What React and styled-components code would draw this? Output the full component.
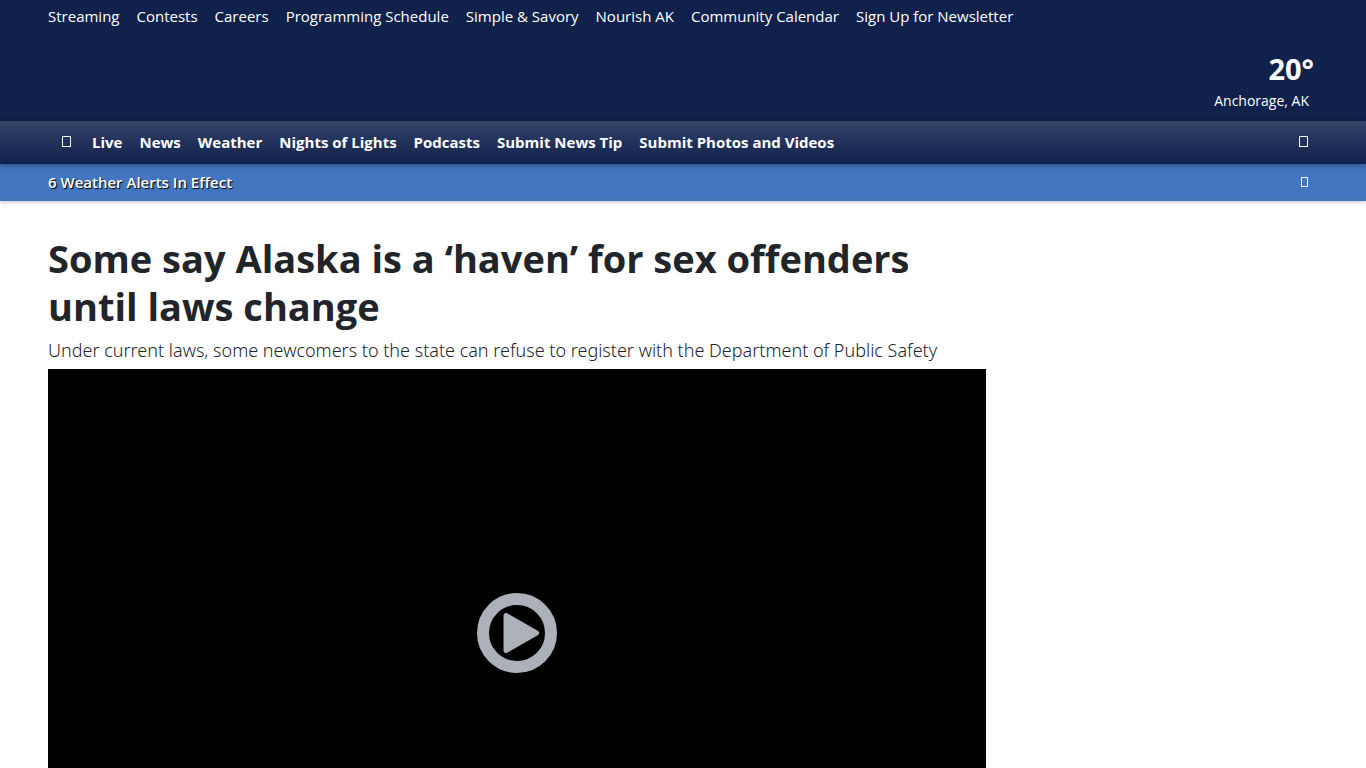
import React from "react";
import styled, { createGlobalStyle } from "styled-components";

const GlobalStyle = createGlobalStyle`
  *, *::before, *::after { box-sizing: border-box; }
  body {
    margin: 0;
    background: #fff;
    color: #212529;
    font-family: "Open Sans", "Noto Sans", sans-serif;
    font-size: 15px;
    line-height: 24px;
  }
`;

const Masthead = styled.header`
  background: #10214b;
  color: #fff;
`;

const TopNav = styled.nav`
  display: flex;
  flex-wrap: wrap;
  gap: 0 17px;
  padding: 4px 48px;
`;

const NavLink = styled.a`
  color: #fff;
  text-decoration: none;
  font-weight: ${(p) => (p.$strong ? 700 : 400)};
  &:hover { text-decoration: underline; }
`;

const BrandRow = styled.div`
  display: flex;
  justify-content: flex-end;
  padding: 17px 52px 8px;
`;

const Conditions = styled.a`
  display: flex;
  flex-direction: column;
  align-items: flex-end;
  color: #fff;
  text-decoration: none;
`;

const Temperature = styled.strong`
  font-size: 29px;
  line-height: 40px;
`;

const City = styled.span`
  padding: 0 5px;
  font-size: 14px;
  line-height: 24px;
`;

const MainNav = styled.nav`
  position: relative;
  display: flex;
  align-items: center;
  gap: 16px;
  min-height: 43px;
  padding: 0 53px 2px 57px;
  background: linear-gradient(#34466a, #27365f 35%, #10214b);
  box-shadow: 0 0 6px rgba(0, 0, 0, 0.4);
`;

const MainLinks = styled.div`
  display: flex;
  flex: 1;
  flex-wrap: wrap;
  gap: 0 17px;
`;

const IconButton = styled.button`
  display: flex;
  padding: 4px 5px;
  border: 0;
  background: none;
  color: #fff;
  cursor: pointer;
`;

const Glyph = styled.span`
  width: ${(p) => (p.$small ? 7 : 9)}px;
  height: ${(p) => (p.$small ? 10 : 11)}px;
  border: 1px solid currentColor;
`;

const AlertBar = styled.section`
  display: flex;
  align-items: center;
  justify-content: space-between;
  min-height: 37px;
  padding: 0 53px 2px 48px;
  background: linear-gradient(#3f70b5, #4475c1 30%, #4475c1 85%, #4876b6);
  box-shadow: 0 1px 4px rgba(0, 0, 60, 0.25);
  color: #fff;
`;

const AlertText = styled.a`
  color: #fff;
  font-weight: 600;
  text-decoration: none;
  text-shadow: 1px 1px 1px #000;
`;

const Page = styled.main`
  display: grid;
  grid-template-columns: minmax(0, 1fr) 300px;
  gap: 32px;
  padding: 33px 48px 0;
`;

const Headline = styled.h1`
  margin: 0 0 7px;
  font-size: 38px;
  font-weight: 700;
  line-height: 48px;
`;

const Deck = styled.p`
  margin: 0 0 6px;
  font-family: "Noto Sans", "Open Sans", sans-serif;
  font-size: 18px;
  font-weight: 300;
  line-height: 26px;
`;

const Player = styled.div`
  display: flex;
  align-items: center;
  justify-content: center;
  aspect-ratio: 16 / 9;
  background: #000;
`;

const PlayButton = styled.button`
  display: flex;
  padding: 0;
  border: 0;
  border-radius: 50%;
  background: none;
  color: #acb0b8;
  cursor: pointer;
`;

const topLinks = ["Streaming", "Contests", "Careers", "Programming Schedule", "Simple & Savory", "Nourish AK", "Community Calendar", "Sign Up for Newsletter"];
const mainLinks = ["Live", "News", "Weather", "Nights of Lights", "Podcasts", "Submit News Tip", "Submit Photos and Videos"];

function PlayIcon() {
  return (
    <svg width="80" height="80" viewBox="0 0 80 80" aria-hidden="true">
      <circle cx="40" cy="40" r="34" fill="none" stroke="currentColor" strokeWidth="12" />
      <path d="M29 22.5 L59.5 40 L29 57.5 Z" fill="currentColor" stroke="currentColor" strokeWidth="5" strokeLinejoin="round" />
    </svg>
  );
}

export default function App() {
  return (
    <>
      <GlobalStyle />
      <Masthead>
        <TopNav aria-label="Secondary">
          {topLinks.map((label) => <NavLink href="#" key={label}>{label}</NavLink>)}
        </TopNav>
        <BrandRow>
          <Conditions href="#">
            <Temperature>20°</Temperature>
            <City>Anchorage, AK</City>
          </Conditions>
        </BrandRow>
        <MainNav aria-label="Main">
          <IconButton type="button" aria-label="Home"><Glyph /></IconButton>
          <MainLinks>
            {mainLinks.map((label) => <NavLink $strong href="#" key={label}>{label}</NavLink>)}
          </MainLinks>
          <IconButton type="button" aria-label="Search"><Glyph /></IconButton>
        </MainNav>
      </Masthead>
      <AlertBar>
        <AlertText href="#">6 Weather Alerts In Effect</AlertText>
        <IconButton type="button" aria-label="Close alerts"><Glyph $small /></IconButton>
      </AlertBar>
      <Page>
        <article>
          <Headline>Some say Alaska is a ‘haven’ for sex offenders until laws change</Headline>
          <Deck>Under current laws, some newcomers to the state can refuse to register with the Department of Public Safety</Deck>
          <Player>
            <PlayButton type="button" aria-label="Play video"><PlayIcon /></PlayButton>
          </Player>
        </article>
      </Page>
    </>
  );
}
